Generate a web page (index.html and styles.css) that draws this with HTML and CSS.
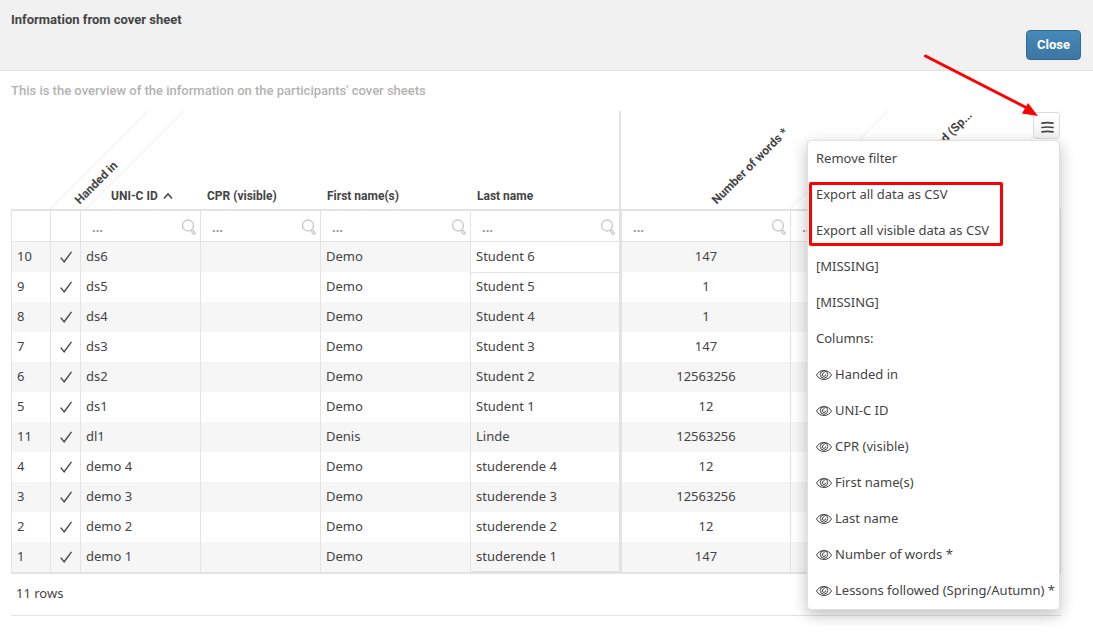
FILE: index.html
```html
<!DOCTYPE html>
<html lang="en">

<head>
    <meta charset="UTF-8">
    <meta name="viewport" content="width=device-width, initial-scale=1.0">
    <title>Information from cover sheet</title>
    <link rel="stylesheet" href="styles.css">
</head>

<body>
    <!-- Shared icons -->
    <svg class="icon-defs" aria-hidden="true">
        <symbol id="icon-check" viewBox="0 0 14 14">
            <path d="M1.2 8 2.4 7.3 5 10.8 12 1.5 13 2.2 5.2 13Z" fill="currentColor" />
        </symbol>
        <symbol id="icon-search" viewBox="0 0 16 16">
            <circle cx="7" cy="6.5" r="5.5" />
            <path d="M9.8 11.4 12 14.8Q13 15.6 13.8 14.8 14.4 13.8 13.6 13.2L11.4 10.6" />
        </symbol>
        <symbol id="icon-eye" viewBox="0 0 16 12">
            <path d="M.5 6Q3.2 1.5 8 1.5T15.5 6Q12.8 10.5 8 10.5T.5 6Z" />
            <circle cx="8" cy="5.5" r="3.7" />
            <path d="M8.6 3.7Q6.2 3.7 6.2 6.2 6.8 7.4 8 7.4 9.6 7.2 9.700 5.600" />
        </symbol>
    </svg>

    <!-- Page header -->
    <header class="page-header">
        <h1>Information from cover sheet</h1>
        <button type="button" class="close-btn">Close</button>
    </header>

    <main class="content">
        <p class="intro">This is the overview of the information on the participants' cover sheets</p>

        <div class="grid">
            <table class="grid-table">
                <colgroup>
                    <col class="col-no">
                    <col class="col-check">
                    <col class="col-id">
                    <col class="col-id">
                    <col class="col-first">
                    <col class="col-last">
                    <col class="col-words">
                    <col>
                </colgroup>
                <thead>
                    <tr class="labels">
                        <th></th>
                        <th class="slanted">
                            <svg class="slant-line" viewBox="0 0 136 98"><path d="M0 98 98 0M36 98 134 0" /></svg>
                            <span>Handed in</span>
                        </th>
                        <th class="after-slanted">UNI-C ID <svg class="sort" viewBox="0 0 10 8"><path d="M1 6.5 5 2 9 6.5" /></svg></th>
                        <th>CPR (visible)</th>
                        <th>First name(s)</th>
                        <th>Last name</th>
                        <th class="slanted words"><span>Number of words *</span></th>
                        <th class="slanted lessons">
                            <svg class="slant-line wide" viewBox="0 0 272 98"><path d="M0 98 98 0M171 98 269 0" /></svg>
                            <span>Lessons followed (Sp...</span>
                        </th>
                    </tr>
                    <tr class="filters">
                        <td></td>
                        <td></td>
                        <td><label><input type="text" placeholder="..." aria-label="Filter UNI-C ID"><svg><use href="#icon-search" /></svg></label></td>
                        <td><label><input type="text" placeholder="..." aria-label="Filter CPR"><svg><use href="#icon-search" /></svg></label></td>
                        <td><label><input type="text" placeholder="..." aria-label="Filter first name"><svg><use href="#icon-search" /></svg></label></td>
                        <td><label><input type="text" placeholder="..." aria-label="Filter last name"><svg><use href="#icon-search" /></svg></label></td>
                        <td class="words"><label><input type="text" placeholder="..." aria-label="Filter number of words"><svg><use href="#icon-search" /></svg></label></td>
                        <td><label><input type="text" placeholder="..." aria-label="Filter lessons followed"><svg><use href="#icon-search" /></svg></label></td>
                    </tr>
                </thead>
                <tbody>
                    <tr><td>10</td><td class="check"><svg><use href="#icon-check" /></svg></td><td>ds6</td><td></td><td>Demo</td><td class="focused">Student 6</td><td class="words">147</td><td></td></tr>
                    <tr><td>9</td><td class="check"><svg><use href="#icon-check" /></svg></td><td>ds5</td><td></td><td>Demo</td><td>Student 5</td><td class="words">1</td><td></td></tr>
                    <tr><td>8</td><td class="check"><svg><use href="#icon-check" /></svg></td><td>ds4</td><td></td><td>Demo</td><td>Student 4</td><td class="words">1</td><td></td></tr>
                    <tr><td>7</td><td class="check"><svg><use href="#icon-check" /></svg></td><td>ds3</td><td></td><td>Demo</td><td>Student 3</td><td class="words">147</td><td></td></tr>
                    <tr><td>6</td><td class="check"><svg><use href="#icon-check" /></svg></td><td>ds2</td><td></td><td>Demo</td><td>Student 2</td><td class="words">12563256</td><td></td></tr>
                    <tr><td>5</td><td class="check"><svg><use href="#icon-check" /></svg></td><td>ds1</td><td></td><td>Demo</td><td>Student 1</td><td class="words">12</td><td></td></tr>
                    <tr><td>11</td><td class="check"><svg><use href="#icon-check" /></svg></td><td>dl1</td><td></td><td>Denis</td><td>Linde</td><td class="words">12563256</td><td></td></tr>
                    <tr><td>4</td><td class="check"><svg><use href="#icon-check" /></svg></td><td>demo 4</td><td></td><td>Demo</td><td>studerende 4</td><td class="words">12</td><td></td></tr>
                    <tr><td>3</td><td class="check"><svg><use href="#icon-check" /></svg></td><td>demo 3</td><td></td><td>Demo</td><td>studerende 3</td><td class="words">12563256</td><td></td></tr>
                    <tr><td>2</td><td class="check"><svg><use href="#icon-check" /></svg></td><td>demo 2</td><td></td><td>Demo</td><td>studerende 2</td><td class="words">12</td><td></td></tr>
                    <tr><td>1</td><td class="check"><svg><use href="#icon-check" /></svg></td><td>demo 1</td><td></td><td>Demo</td><td class="last">studerende 1</td><td class="words">147</td><td></td></tr>
                </tbody>
            </table>
            <div class="grid-footer">11 rows</div>

            <!-- Grid menu -->
            <div class="grid-menu">
                <button type="button" class="menu-btn" aria-label="Grid menu">
                    <svg viewBox="0 0 13 12"><path d="M1 2.2Q6.5 1.2 12 2.2M1 6.5Q6.5 5.5 12 6.5M1 10.8Q6.5 9.8 12 10.8" /></svg>
                </button>
                <ul class="menu">
                    <li><button type="button">Remove filter</button></li>
                    <li><button type="button">Export all data as CSV</button></li>
                    <li><button type="button">Export all visible data as CSV</button></li>
                    <li><button type="button">[MISSING]</button></li>
                    <li><button type="button">[MISSING]</button></li>
                    <li><span>Columns:</span></li>
                    <li><button type="button"><svg><use href="#icon-eye" /></svg>Handed in</button></li>
                    <li><button type="button"><svg><use href="#icon-eye" /></svg>UNI-C ID</button></li>
                    <li><button type="button"><svg><use href="#icon-eye" /></svg>CPR (visible)</button></li>
                    <li><button type="button"><svg><use href="#icon-eye" /></svg>First name(s)</button></li>
                    <li><button type="button"><svg><use href="#icon-eye" /></svg>Last name</button></li>
                    <li><button type="button"><svg><use href="#icon-eye" /></svg>Number of words *</button></li>
                    <li><button type="button"><svg><use href="#icon-eye" /></svg>Lessons followed (Spring/Autumn) *</button></li>
                </ul>
                <!-- Marks on the export options -->
                <div class="mark-box"></div>
                <svg class="mark-arrow" viewBox="0 0 118 64">
                    <path d="M5.5 4 106 55.5" />
                    <polygon points="118,64 102,61.5 108,51" />
                </svg>
            </div>
        </div>
    </main>
</body>

</html>
```
FILE: styles.css
```css
* {
    box-sizing: border-box;
    margin: 0;
    padding: 0;
}

body {
    font-family: "Noto Sans", sans-serif;
    font-size: 13px;
    line-height: 20px;
    color: #444;
    background-color: #fff;
}

button,
input {
    font: inherit;
    color: inherit;
}

svg {
    fill: none;
    stroke: currentColor;
}

.icon-defs {
    position: absolute;
    width: 0;
    height: 0;
}

h1,
th,
.intro,
.close-btn {
    font-family: Roboto, "Noto Sans", sans-serif;
}

/* Page header */
.page-header {
    display: flex;
    justify-content: space-between;
    padding: 10px 12px 10px 11px;
    background-color: #f1f1f1;
    border-bottom: 1px solid #e2e2e2;
}

.page-header h1 {
    font-size: 13px;
    font-weight: bold;
}

.close-btn {
    height: 30px;
    margin-top: 20px;
    padding: 0 10px 1px;
    color: #fff;
    font-size: 13px;
    font-weight: bold;
    background: linear-gradient(#4689b9, #3d76a3);
    border: 1px solid #35698f;
    border-radius: 4px;
    cursor: pointer;
}

.content {
    padding: 10px 32px 10px 11px;
}

.intro {
    margin-bottom: 10px;
    color: #b3b3b3;
    font-weight: 500;
}

/* Grid */
.grid {
    position: relative;
}

.grid-table {
    width: 100%;
    table-layout: fixed;
    border-collapse: separate;
    border-spacing: 0;
    border-bottom: 2px solid #e3e3e3;
}

.col-no {
    width: 39px;
}

.col-check {
    width: 30px;
}

.col-id {
    width: 120px;
}

.col-first {
    width: 150px;
}

.col-last {
    width: 149px;
}

.col-words {
    width: 171px;
}

.labels th {
    height: 100px;
    padding: 0 6px 3px 7px;
    border-bottom: 2px solid #e3e3e3;
    font-size: 12px;
    text-align: left;
    vertical-align: bottom;
    white-space: nowrap;
}

.labels .after-slanted {
    padding-left: 31px;
}

.labels .words {
    border-left: 2px solid #e3e3e3;
}

.sort {
    width: 10px;
    height: 8px;
    margin-left: 2px;
    stroke-width: 1.5;
}

/* Labels turned 45 degrees over narrow columns */
.labels .slanted {
    position: relative;
}

.slanted span {
    position: absolute;
    bottom: 0;
    left: 34px;
    transform: rotate(-45deg);
    transform-origin: left bottom;
}

.slanted.words span {
    left: 100px;
}

.slanted.lessons span {
    left: 98px;
}

.slant-line {
    position: absolute;
    bottom: 0;
    left: 0;
    width: 136px;
    height: 98px;
    stroke: #eee;
}

.slant-line.wide {
    width: 272px;
}

.grid-table td {
    height: 30px;
    padding: 0 5px 2px;
    border-left: 1px solid #e3e3e3;
    white-space: nowrap;
}

.grid-table td:last-child {
    border-right: 1px solid #e3e3e3;
}

.grid-table td.words {
    border-left-width: 3px;
    text-align: center;
}

.grid-table .filters td {
    height: 31px;
    padding-bottom: 0;
    border-bottom: 1px solid #e3e3e3;
}

.filters label {
    display: flex;
    align-items: center;
}

.filters input {
    flex: 1;
    min-width: 0;
    height: 26px;
    padding: 2px 6px 0;
    border: none;
    outline: none;
    background: transparent;
}

.filters input::placeholder {
    color: #999;
    font-weight: bold;
}

.filters svg {
    width: 16px;
    height: 16px;
    margin: 2px -2px 0 0;
    color: #c8c8c8;
    stroke-width: 1.3;
}

tbody tr:nth-child(odd) {
    background-color: #f6f6f6;
}

tbody .focused {
    background-color: #fff;
    box-shadow: 0 1px #e3e3e3;
}

tbody .last {
    border-bottom: 1px solid #e3e3e3;
}

.grid-table .check {
    padding-bottom: 0;
}

.check svg {
    display: block;
    width: 14px;
    height: 14px;
    margin-left: 3px;
    stroke: none;
}

.grid-footer {
    padding: 9px 5px 12px;
    border-bottom: 1px solid #e3e3e3;
}

/* Grid menu */
.grid-menu {
    position: absolute;
    top: 1px;
    right: 1px;
}

.menu-btn {
    display: flex;
    align-items: center;
    justify-content: center;
    width: 27px;
    height: 27px;
    margin-left: auto;
    padding: 2px 0 0 1px;
    background: linear-gradient(#fff, #f3f3f3);
    border: 1px solid #dcdcdc;
    border-radius: 3px;
    cursor: pointer;
}

.menu-btn svg {
    width: 13px;
    height: 12px;
    stroke-width: 1.7;
    stroke-linecap: round;
}

.menu {
    margin-top: 1px;
    list-style: none;
    background-color: #fff;
    border: 1px solid #e0e0e0;
    border-radius: 4px;
    box-shadow: 0 5px 15px rgba(0, 0, 0, 0.25);
}

.menu button,
.menu span {
    display: flex;
    align-items: center;
    width: 100%;
    height: 36px;
    padding: 0 4px 2px 8px;
    background: none;
    border: none;
    white-space: nowrap;
}

.menu button {
    cursor: pointer;
}

.menu button:hover {
    background-color: #f6f6f6;
}

.menu svg {
    width: 16px;
    height: 12px;
    margin: 2px 3px 0 0;
}

.mark-box {
    position: absolute;
    top: 70px;
    left: 2px;
    width: 194px;
    height: 64px;
    border: 3px solid #f00;
    border-radius: 2px;
}

.mark-arrow {
    position: absolute;
    top: -60px;
    right: 22px;
    width: 118px;
    height: 64px;
    stroke: #f00;
    stroke-width: 3;
    stroke-linecap: round;
    pointer-events: none;
}

.mark-arrow polygon {
    fill: #f00;
    stroke: none;
}
```
